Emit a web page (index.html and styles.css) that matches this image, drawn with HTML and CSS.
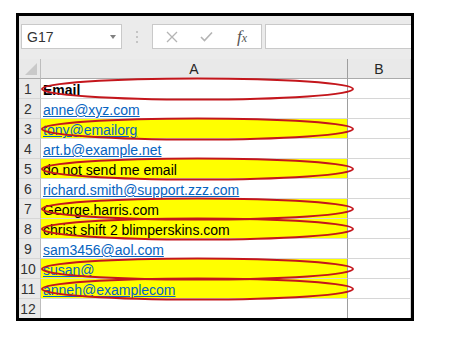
FILE: index.html
```html
<!DOCTYPE html>
<html>
<head>
<meta charset="utf-8">
<link rel="stylesheet" href="styles.css">
</head>
<body>
<div class="frame">
  <div class="fbar">
    <div class="namebox"><span class="nm">G17</span><span class="dd"></span></div>
    <div class="dots"><i></i><i></i><i></i></div>
    <div class="fbtns">
      <svg class="ic" width="12" height="12" viewBox="0 0 12 12"><path d="M1 1L11 11M11 1L1 11" stroke="#b4b4b4" stroke-width="1.3" fill="none"/></svg>
      <svg class="ic" width="13" height="11" viewBox="0 0 13 11"><path d="M1 6L4.5 9.5L12 1.5" stroke="#b4b4b4" stroke-width="1.6" fill="none"/></svg>
      <span class="fx">f<span class="fxs">x</span></span>
    </div>
    <div class="finput"></div>
  </div>
  <div class="grid">
    <div class="rh corner"><span class="tri"></span></div><div class="ch cha">A</div><div class="ch">B</div>

    <div class="rh">1</div><div class="ca"><b>Email</b></div><div class="cb"></div>
    <div class="rh">2</div><div class="ca"><span class="lnk">anne@xyz.com</span></div><div class="cb"></div>
    <div class="rh">3</div><div class="ca y"><span class="lnk">tony@emailorg</span></div><div class="cb"></div>
    <div class="rh">4</div><div class="ca"><span class="lnk">art.b@example.net</span></div><div class="cb"></div>
    <div class="rh">5</div><div class="ca y">do not send me email</div><div class="cb"></div>
    <div class="rh">6</div><div class="ca"><span class="lnk">richard.smith@support.zzz.com</span></div><div class="cb"></div>
    <div class="rh">7</div><div class="ca y">George.harris.com</div><div class="cb"></div>
    <div class="rh">8</div><div class="ca y">christ shift 2 blimperskins.com</div><div class="cb"></div>
    <div class="rh">9</div><div class="ca"><span class="lnk">sam3456@aol.com</span></div><div class="cb"></div>
    <div class="rh">10</div><div class="ca y"><span class="lnk">susan@</span></div><div class="cb"></div>
    <div class="rh">11</div><div class="ca y"><span class="lnk">anneh@examplecom</span></div><div class="cb"></div>
    <div class="rh">12</div><div class="ca"></div><div class="cb"></div>

    <svg class="marks" width="392" height="260" viewBox="0 0 392 260">
      <g fill="none" stroke="#c4161c" stroke-width="2">
        <ellipse cx="178.5" cy="30" rx="155.5" ry="10.5"/>
        <ellipse cx="178.5" cy="70" rx="155.5" ry="10.5"/>
        <ellipse cx="178.5" cy="110" rx="155.5" ry="10.5"/>
        <ellipse cx="178.5" cy="150" rx="155.5" ry="10.5"/>
        <ellipse cx="178.5" cy="170" rx="155.5" ry="10.5"/>
        <ellipse cx="178.5" cy="210" rx="155.5" ry="10.5"/>
        <ellipse cx="178.5" cy="230" rx="155.5" ry="10.5"/>
      </g>
    </svg>
  </div>
</div>
</body>
</html>
```
FILE: styles.css
```css
html, body {
  margin: 0;
  padding: 0;
  background: #ffffff;
}
body {
  font-family: "Liberation Sans", Arial, sans-serif;
}
.frame {
  margin: 13px 0 0 16px;
  width: 398px;
  height: 308px;
  box-sizing: border-box;
  border: 3px solid #000;
  overflow: hidden;
  background: #fff;
}
.fbar {
  height: 43px;
  box-sizing: border-box;
  background: #ebebeb;
  display: flex;
  align-items: flex-start;
  padding: 8px 0 0 2px;
}
.namebox {
  width: 101px;
  height: 25px;
  box-sizing: border-box;
  border: 1px solid #c9c9c9;
  background: #fff;
  display: flex;
  align-items: center;
  justify-content: space-between;
  padding: 0 5px 0 5px;
}
.nm {
  font-size: 14px;
  color: #333;
}
.dd {
  width: 0;
  height: 0;
  border-left: 3.5px solid transparent;
  border-right: 3.5px solid transparent;
  border-top: 4px solid #808080;
  margin-top: 1px;
}
.dots {
  width: 30px;
  height: 25px;
  display: flex;
  flex-direction: column;
  align-items: center;
  justify-content: center;
  gap: 3px;
}
.dots i {
  display: block;
  width: 2px;
  height: 2px;
  background: #c4c4c4;
}
.fbtns {
  width: 110px;
  height: 25px;
  box-sizing: border-box;
  border: 1px solid #c9c9c9;
  background: #fff;
  display: flex;
  align-items: center;
  padding-left: 13px;
}
.fbtns .ic {
  display: block;
}
.fbtns .ic + .ic {
  margin-left: 22px;
}
.fx {
  margin-left: 24px;
  font-family: "Liberation Serif", serif;
  font-style: italic;
  font-size: 17px;
  color: #555;
}
.fxs {
  font-size: 12px;
}
.finput {
  flex: 1;
  height: 25px;
  box-sizing: border-box;
  border: 1px solid #c9c9c9;
  background: #fff;
  margin-left: 3px;
  margin-right: -4px;
}
.grid {
  position: relative;
  display: grid;
  grid-template-columns: 22px 307px 1fr;
  grid-auto-rows: 20px;
}
.grid > div {
  box-sizing: border-box;
  border-bottom: 1px solid #d6d6d6;
  border-right: 1px solid #d6d6d6;
  font-size: 14px;
  line-height: 20px;
  white-space: nowrap;
  overflow: hidden;
}
.rh {
  background: #e9e9e9;
  color: #333;
  text-align: center;
  padding-right: 3px;
  border-right-color: #bdbdbd !important;
}
.corner {
  position: relative;
  border-bottom-color: #ababab !important;
}
.tri {
  position: absolute;
  right: 3px;
  bottom: 3px;
  width: 0;
  height: 0;
  border-left: 12px solid transparent;
  border-bottom: 12px solid #c9c9c9;
}
.ch {
  background: #e9e9e9;
  color: #262626;
  text-align: center;
  border-bottom-color: #ababab !important;
}
.cha {
  border-right-color: #9e9e9e !important;
}
.ca {
  padding: 1px 0 0 2px;
  color: #000;
  border-right-color: #9e9e9e !important;
  overflow: visible !important;
}
.ca.y {
  background: #ffff00;
}
.lnk {
  color: #0563c1;
  text-decoration: underline;
}
.marks {
  position: absolute;
  left: 0;
  top: 0;
  pointer-events: none;
}
```
